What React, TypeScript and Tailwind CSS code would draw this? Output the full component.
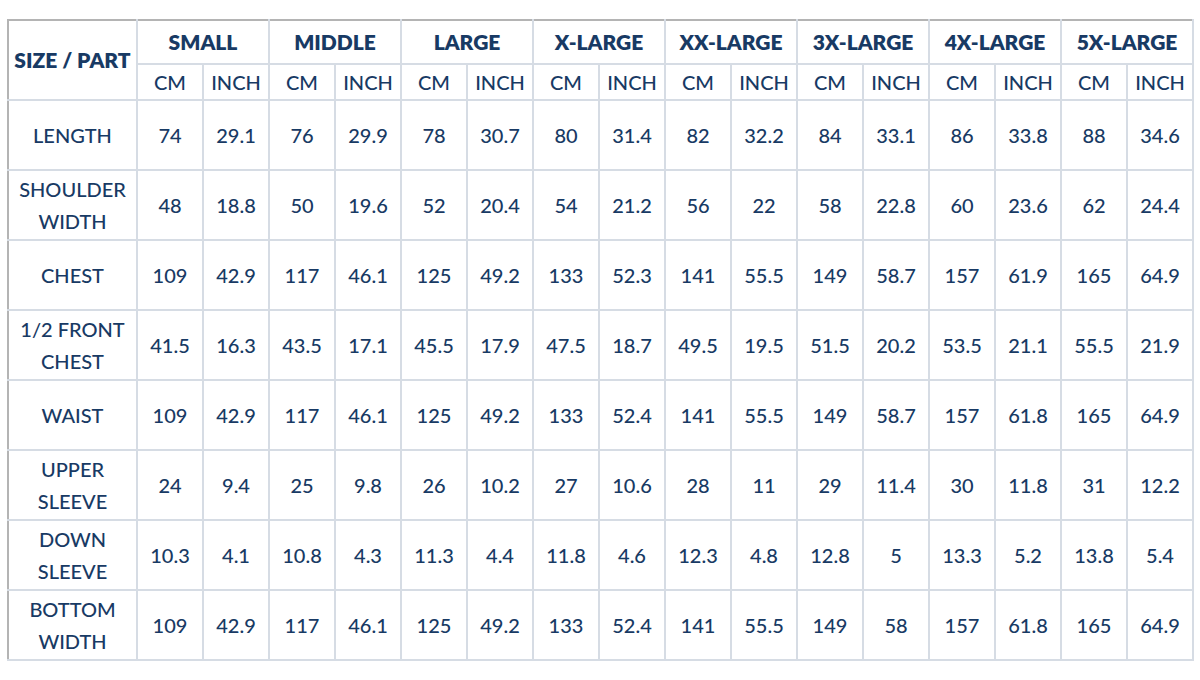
import React from "react";

const sizes = ["SMALL", "MIDDLE", "LARGE", "X-LARGE", "XX-LARGE", "3X-LARGE", "4X-LARGE", "5X-LARGE"];

const rows: { label: string[]; vals: string[] }[] = [
  { label: ["LENGTH"], vals: ["74", "29.1", "76", "29.9", "78", "30.7", "80", "31.4", "82", "32.2", "84", "33.1", "86", "33.8", "88", "34.6"] },
  { label: ["SHOULDER", "WIDTH"], vals: ["48", "18.8", "50", "19.6", "52", "20.4", "54", "21.2", "56", "22", "58", "22.8", "60", "23.6", "62", "24.4"] },
  { label: ["CHEST"], vals: ["109", "42.9", "117", "46.1", "125", "49.2", "133", "52.3", "141", "55.5", "149", "58.7", "157", "61.9", "165", "64.9"] },
  { label: ["1/2 FRONT", "CHEST"], vals: ["41.5", "16.3", "43.5", "17.1", "45.5", "17.9", "47.5", "18.7", "49.5", "19.5", "51.5", "20.2", "53.5", "21.1", "55.5", "21.9"] },
  { label: ["WAIST"], vals: ["109", "42.9", "117", "46.1", "125", "49.2", "133", "52.4", "141", "55.5", "149", "58.7", "157", "61.8", "165", "64.9"] },
  { label: ["UPPER", "SLEEVE"], vals: ["24", "9.4", "25", "9.8", "26", "10.2", "27", "10.6", "28", "11", "29", "11.4", "30", "11.8", "31", "12.2"] },
  { label: ["DOWN", "SLEEVE"], vals: ["10.3", "4.1", "10.8", "4.3", "11.3", "4.4", "11.8", "4.6", "12.3", "4.8", "12.8", "5", "13.3", "5.2", "13.8", "5.4"] },
  { label: ["BOTTOM", "WIDTH"], vals: ["109", "42.9", "117", "46.1", "125", "49.2", "133", "52.4", "141", "55.5", "149", "58", "157", "61.8", "165", "64.9"] },
];

export default function App() {
  return (
    <div className="w-[1200px] h-[680px] bg-white pt-[19px] pl-[7px]" style={{ fontFamily: "Lato, 'Open Sans', sans-serif" }}>
      <table className="table-fixed border-collapse text-[#183a64] text-[20px] font-medium border-t-2 border-l-2 border-t-[#b4b4b4] border-l-[#b4b4b4]">
        <colgroup>
          <col className="w-[129px]" />
          {Array.from({ length: 16 }).map((_, i) => (
            <col key={i} className="w-[66px]" />
          ))}
        </colgroup>
        <thead>
          <tr className="h-[44px]">
            <th rowSpan={2} className="border-2 border-[#d6dce4] border-t-[#b4b4b4] border-l-[#b4b4b4] font-extrabold text-[21px] text-center align-middle">
              SIZE / PART
            </th>
            {sizes.map((s) => (
              <th key={s} colSpan={2} className="border-2 border-[#d6dce4] border-t-[#b4b4b4] font-extrabold text-[21px] text-center align-middle">
                {s}
              </th>
            ))}
          </tr>
          <tr className="h-[36px]">
            {sizes.map((s) => (
              <React.Fragment key={s}>
                <th className="border-2 border-[#d6dce4] font-medium text-center align-middle">CM</th>
                <th className="border-2 border-[#d6dce4] font-medium text-center align-middle">INCH</th>
              </React.Fragment>
            ))}
          </tr>
        </thead>
        <tbody>
          {rows.map((r, ri) => (
            <tr key={ri} className="h-[70px]">
              <td className="border-2 border-[#d6dce4] border-l-[#b4b4b4] text-center align-middle leading-[32px]">
                {r.label.map((l, i) => (
                  <div key={i}>{l}</div>
                ))}
              </td>
              {r.vals.map((v, vi) => (
                <td key={vi} className="border-2 border-[#d6dce4] text-center align-middle">
                  {v}
                </td>
              ))}
            </tr>
          ))}
        </tbody>
      </table>
    </div>
  );
}
